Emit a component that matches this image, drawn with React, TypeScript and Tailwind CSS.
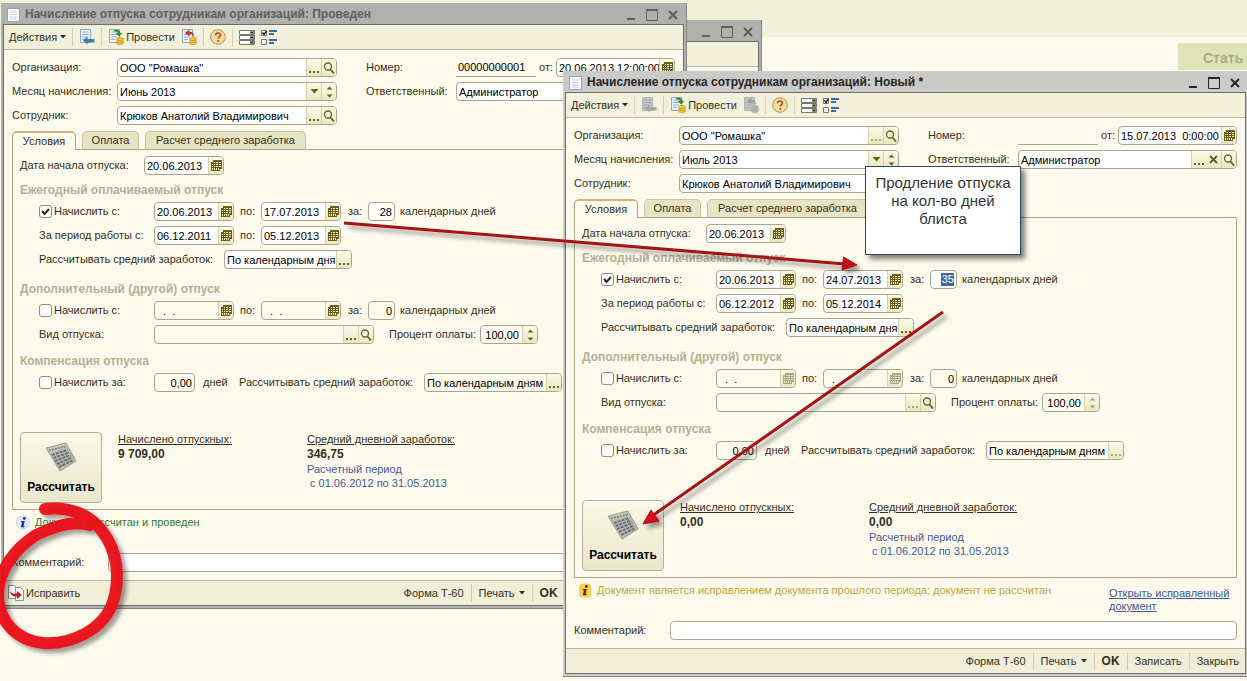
import type { ReactNode } from 'react'
import clsx from 'clsx'

type Action = 'dots' | 'search' | 'calendar' | 'down' | 'spin' | 'clear'

const actionNames: Record<Action, string> = {
  dots: 'Выбрать',
  search: 'Открыть',
  calendar: 'Календарь',
  down: 'Список',
  spin: 'Изменить',
  clear: 'Очистить'
}

function ActionIcon({ action }: { action: Action }) {
  switch (action) {
    case 'dots':
      return (
        <svg width="12" height="12" viewBox="0 0 12 12" fill="currentColor">
          <path d="M1 9h2v2H1zM5 9h2v2H5zM9 9h2v2H9z" />
        </svg>
      )
    case 'search':
      return (
        <svg width="12" height="12" viewBox="0 0 12 12" fill="none" stroke="currentColor">
          <circle cx="5" cy="4.5" r="3.5" strokeWidth="1.3" />
          <path d="M7.5 7.5l3.5 4" strokeWidth="1.8" />
        </svg>
      )
    case 'calendar':
      return (
        <svg width="11" height="12" viewBox="0 0 11 12">
          <path d="M2 0h9v9H9v2H0V2h2z" fill="currentColor" />
          <path
            d="M3 2h1v1H3zM5 2h2v1H5zM8 2h2v1H8zM1 4h1v1H1zM3 4h1v1H3zM5 4h2v1H5zM8 4h2v1H8zM1 6h1v1H1zM3 6h1v1H3zM5 6h2v1H5zM8 6h2v1H8zM1 8h1v2H1zM3 8h1v2H3zM5 8h1v2H5zM7 8h1v2H7z"
            fill="#f3eec0"
          />
        </svg>
      )
    case 'down':
      return (
        <svg width="9" height="5" viewBox="0 0 9 5" fill="currentColor">
          <path d="M0.5 0h8l-4 4.5z" />
        </svg>
      )
    case 'spin':
      return (
        <svg width="7" height="12" viewBox="0 0 7 12" fill="currentColor">
          <path d="M0.5 3.5h6l-3-3zM0.5 8.5h6l-3 3z" />
        </svg>
      )
    case 'clear':
      return (
        <svg width="9" height="9" viewBox="0 0 9 9" stroke="currentColor" strokeWidth="2">
          <path d="M1 1l7 7M8 1l-7 7" />
        </svg>
      )
  }
}

interface FieldProps {
  id: string
  name?: string
  value?: string
  actions?: Action[]
  dimmed?: Action[]
  className?: string
  muted?: boolean
  right?: boolean
  selected?: boolean
}

function Field({ id, name, value = '', actions = [], dimmed = [], className, muted, right, selected }: FieldProps) {
  return (
    <span
      className={clsx(
        'flex h-[19px] shrink-0 overflow-hidden rounded-[4px] border border-[#a8a78d]',
        muted ? 'bg-[#fdfbee]' : 'bg-white',
        right && !actions.length && 'justify-end pr-[2px]',
        className
      )}
    >
      <input
        id={id}
        aria-label={name}
        defaultValue={value}
        className={clsx(
          'min-w-0 outline-none',
          right && 'text-right',
          right && actions.length > 0 && 'pr-[3px]',
          selected
            ? 'my-[2px] h-[13px] w-[13px] bg-[#4666a0] text-white'
            : 'h-[17px] w-full flex-1 bg-transparent pl-[2px] text-black'
        )}
      />
      {actions.map((action) => (
        <button
          key={action}
          aria-label={actionNames[action]}
          className={clsx(
            'flex w-[15px] shrink-0 items-center justify-center bg-gradient-to-b from-[#fbfae8] to-[#eae8c0]',
            (action === actions[0] || action === 'search' || action === 'spin') && 'border-l border-[#d3d1ae]',
            dimmed.includes(action) ? 'text-[#aaa88a]' : 'text-[#6b5e1c]'
          )}
        >
          <ActionIcon action={action} />
        </button>
      ))}
    </span>
  )
}

function Label({ htmlFor, className, children }: { htmlFor: string; className?: string; children: ReactNode }) {
  return (
    <label htmlFor={htmlFor} className={clsx('shrink-0 whitespace-nowrap', className)}>
      {children}
    </label>
  )
}

function Tick({ id, checked, children }: { id: string; checked?: boolean; children: ReactNode }) {
  return (
    <span className="flex w-[115px] shrink-0 items-center gap-[2px]">
      <span className="relative flex size-[13px]">
        <input
          id={id}
          type="checkbox"
          defaultChecked={checked}
          className="peer size-[13px] appearance-none rounded-[3px] border border-[#8f8e78] bg-white"
        />
        <svg
          viewBox="0 0 13 13"
          className="pointer-events-none absolute inset-0 hidden peer-checked:block"
          fill="none"
          stroke="#2b2a20"
          strokeWidth="2"
        >
          <path d="M3 6l2.5 3L10 4" />
        </svg>
      </span>
      <Label htmlFor={id}>{children}</Label>
    </span>
  )
}

function Row({ indent, children }: { indent?: boolean; children: ReactNode }) {
  return <div className={clsx('flex h-[19px] items-center', indent && 'pl-[19px]')}>{children}</div>
}

function Heading({ className, children }: { className?: string; children: ReactNode }) {
  return (
    <h2 className={clsx('flex items-end pb-1 text-[12px] leading-4 font-bold text-[#b3b093]', className)}>
      {children}
    </h2>
  )
}

function PageIcon() {
  return (
    <svg width="13" height="14" viewBox="0 0 13 14" className="shrink-0">
      <path d="M0.5 0.5h12v13h-12z" fill="#f8fbff" stroke="#8fa5c0" />
      <path d="M3 4h7M3 6.500h7M3 9h7M3 11h7" stroke="#c3d0e0" />
    </svg>
  )
}

function SheetIcon({ off, kind }: { off?: boolean; kind: 'save' | 'post' | 'unpost' }) {
  return (
    <svg width="16" height="16" viewBox="0 0 16 16">
      <path d="M1.500 0.500h10v13h-10z" fill={off ? '#c3c5c8' : '#eef5fb'} stroke={off ? '#b1b3b6' : '#8fa9c2'} />
      <path d="M3 3h7M3 5.500h7M3 8h6M3 10.500h4" stroke={off ? '#a9abae' : '#8fb0cc'} />
      {kind === 'save' && (
        <path d="M4 11.500l4.500-4v2.500h7v3.500h-7v2z" fill={off ? '#a3a5a9' : '#3b7cb0'} />
      )}
      {kind === 'post' && (
        <path d="M6 1c4-1 6.500 .5 6.500 3h2l-3.500 3.500L7.500 4H10C10 3 9 2.500 6 2.500z" fill="#3d8a3a" />
      )}
      {kind === 'unpost' && (
        <path d="M12.500 8c1-4-1-5.500-4-5V0.500L4 4l4.500 3.500V5c2-.3 3 .5 4 3z" fill={off ? '#9fa1a5' : '#b93a2a'} />
      )}
      {kind !== 'save' && (
        <g fill={off ? '#b3b4b4' : '#f0c637'} stroke={off ? '#a3a4a4' : '#b98f1c'} strokeWidth="0.600">
          <ellipse cx="12" cy="14" rx="3.500" ry="1.600" />
          <ellipse cx="12" cy="12" rx="3.500" ry="1.600" />
          <ellipse cx="12" cy="10" rx="3.500" ry="1.600" />
        </g>
      )}
    </svg>
  )
}

function HelpIcon() {
  return (
    <svg width="16" height="16" viewBox="0 0 16 16">
      <circle cx="8" cy="8" r="7.300" fill="#fbdca0" stroke="#c08a52" />
      <path d="M5.500 6.300c0-3 5-3 5-.2 0 1.700-2.300 1.700-2.300 3.500" fill="none" stroke="#9a4f1e" strokeWidth="1.500" />
      <path d="M7.300 11h1.700v1.700H7.300z" fill="#9a4f1e" />
    </svg>
  )
}

function ListIcon() {
  return (
    <svg width="16" height="15" viewBox="0 0 16 15">
      {[0, 5, 10].map((y) => (
        <g key={y}>
          <path d={`M0.500 ${y + 0.5}h15v4h-15z`} fill="#fff" stroke="#77776e" />
          <path d={`M11 ${y + 1}h4v3h-4z`} fill="#8b8b82" />
          <path d={`M12 ${y + 2}h2v1h-2z`} fill="#22221e" />
        </g>
      ))}
    </svg>
  )
}

function SettingsIcon() {
  return (
    <svg width="17" height="15" viewBox="0 0 17 15">
      <path d="M0.500 0.500h5v5h-5zM0.500 9.500h5v5h-5z" fill="#fff" stroke="#77776e" />
      <path d="M1.500 2.500l1.500 2 2.500-3.500" fill="none" stroke="#111" strokeWidth="1.300" />
      <path d="M8 1h8M8 4h5M8 10h8M8 13h5" stroke="#3b68ae" strokeWidth="2" />
    </svg>
  )
}

function FixIcon() {
  return (
    <svg width="16" height="16" viewBox="0 0 16 16">
      <path d="M0.500 0.500h6l2 2v11h-8z" fill="#fff" stroke="#9a8c8c" />
      <path d="M7.500 2.500h5l3 3v10h-8z" fill="#fff" stroke="#9a8c8c" />
      <path d="M2 6c2 3 4 3 7 2.500V6l5 4-5 4v-2.500C5 12 2.500 10 2 6z" fill="#c11b2c" />
    </svg>
  )
}

function CalculatorIcon() {
  return (
    <svg width="32" height="30" viewBox="0 0 32 30">
      <path d="M1 6L21 1l10 18-16 10z" fill="#b9bbb1" stroke="#9b9d94" />
      <path d="M2.500 6.500L20.500 2l2 3.500-18 5z" fill="#c9ccb8" />
      <path d="M4 8.500l16.500-4" stroke="#84866f" strokeWidth="2" strokeDasharray="2 1" />
      <g stroke="#6a6e76" strokeWidth="2" strokeDasharray="3 1">
        <path d="M7 13l15.500-5" />
        <path d="M8.500 16L24 10.500" />
        <path d="M10 19l15.500-6" />
        <path d="M12 22l15-6.500" />
        <path d="M14 25l14.500-7" />
      </g>
    </svg>
  )
}

function InfoIcon({ warning }: { warning?: boolean }) {
  return (
    <svg width="14" height="15" viewBox="0 0 14 15" className="shrink-0">
      {warning ? (
        <rect x="1" y="0.500" width="12" height="14" rx="4" fill="#f8cf4c" />
      ) : (
        <circle cx="7" cy="7.500" r="6.500" fill="#e6ebfa" stroke="#bfcbe8" />
      )}
      <g fill={warning ? '#4a2c10' : '#1b2c9c'}>
        <circle cx="8.300" cy="3.400" r="1.400" />
        <path d="M5 6h3.800l-1.300 5h1.300l-.5 1.200H4.800l1.300-5H4.700z" />
      </g>
    </svg>
  )
}

function WindowButtons() {
  return (
    <div className="ml-auto flex items-center gap-[9px]">
      <button aria-label="Свернуть">
        <svg width="11" height="12" viewBox="0 0 11 12" fill="currentColor">
          <path d="M1 9h8v2H1z" />
        </svg>
      </button>
      <button aria-label="Развернуть">
        <svg width="12" height="12" viewBox="0 0 12 12" fill="none" stroke="currentColor">
          <path d="M0.500 1h11v10.500h-11z" />
          <path d="M0 1h12" strokeWidth="2" />
        </svg>
      </button>
      <button aria-label="Закрыть окно">
        <svg width="12" height="12" viewBox="0 0 12 12" stroke="currentColor" strokeWidth="2">
          <path d="M2 2l8 8M10 2l-8 8" />
        </svg>
      </button>
    </div>
  )
}

function Separator() {
  return <span className="h-[18px] w-px bg-[#cfcdb4]" />
}

function Caret() {
  return (
    <svg width="6" height="4" viewBox="0 0 6 4" fill="currentColor">
      <path d="M0 0h6L3 3.500z" />
    </svg>
  )
}

interface LeaveDoc {
  key: string
  state: string
  number: string
  date: string
  month: string
  to: string
  periodFrom: string
  periodTo: string
  days: string
  accrued: string
  average: string
  posted: boolean
}

const postedDoc: LeaveDoc = {
  key: 'posted',
  state: 'Проведен',
  number: '00000000001',
  date: '20.06.2013 12:00:00',
  month: 'Июнь 2013',
  to: '17.07.2013',
  periodFrom: '06.12.2011',
  periodTo: '05.12.2013',
  days: '28',
  accrued: '9 709,00',
  average: '346,75',
  posted: true
}

const newDoc: LeaveDoc = {
  key: 'new',
  state: 'Новый *',
  number: '',
  date: '15.07.2013  0:00:00',
  month: 'Июль 2013',
  to: '24.07.2013',
  periodFrom: '06.12.2012',
  periodTo: '05.12.2014',
  days: '35',
  accrued: '0,00',
  average: '0,00',
  posted: false
}

function Toolbar({ posted }: { posted: boolean }) {
  return (
    <div className="flex h-[25px] items-center gap-[6px] border-b border-[#b9b79c] bg-[#f3f1dc] pl-[5px]">
      <button className="flex items-center gap-[3px]">
        Действия <Caret />
      </button>
      <Separator />
      <button aria-label="Записать документ">
        <SheetIcon kind="save" off={!posted} />
      </button>
      <Separator />
      <button className="flex items-center gap-[2px]">
        <SheetIcon kind="post" /> Провести
      </button>
      <button aria-label="Отмена проведения">
        <SheetIcon kind="unpost" off={!posted} />
      </button>
      <Separator />
      <button aria-label="Справка">
        <HelpIcon />
      </button>
      <Separator />
      <button aria-label="Список">
        <ListIcon />
      </button>
      <button aria-label="Настройка">
        <SettingsIcon />
      </button>
    </div>
  )
}

function Tabs() {
  return (
    <div role="tablist" className="relative -mb-px flex h-[19px] items-stretch gap-[6px]">
      <button
        role="tab"
        aria-selected="true"
        className="w-[64px] rounded-t-[5px] border border-t-2 border-b-0 border-[#a8a78d] border-t-[#d8b27c] bg-[#fefbee]"
      >
        Условия
      </button>
      <button
        role="tab"
        aria-selected="false"
        className="w-[57px] rounded-t-[5px] border border-[#c6c4a2] border-b-[#a8a78d] bg-[#e6e4c3]"
      >
        Оплата
      </button>
      <button
        role="tab"
        aria-selected="false"
        className="w-[161px] rounded-t-[5px] border border-[#c6c4a2] border-b-[#a8a78d] bg-[#e6e4c3]"
      >
        Расчет среднего заработка
      </button>
    </div>
  )
}

function Conditions({ doc }: { doc: LeaveDoc }) {
  const id = (name: string) => `${doc.key}-${name}`
  const off: Action[] = doc.posted ? [] : ['calendar', 'dots', 'spin']

  return (
    <section className="border border-[#a8a78d] pt-[6px] pb-[6px] pl-[7px]">
      <Row>
        <Label htmlFor={id('start')} className="w-[124px]">
          Дата начала отпуска:
        </Label>
        <Field id={id('start')} value="20.06.2013" actions={['calendar']} className="w-[80px]" />
      </Row>

      <Heading className="h-[27px]">Ежегодный оплачиваемый отпуск</Heading>
      <div className="flex flex-col gap-[5px]">
        <Row indent>
          <Tick id={id('main')} checked>
            Начислить с:
          </Tick>
          <Field id={id('from')} name="Начислить с" value="20.06.2013" actions={['calendar']} className="w-[80px]" />
          <Label htmlFor={id('to')} className="w-[27px] pl-[6px]">
            по:
          </Label>
          <Field id={id('to')} value={doc.to} actions={['calendar']} className="w-[80px]" />
          <Label htmlFor={id('days')} className="w-[27px] pl-[7px]">
            за:
          </Label>
          <Field id={id('days')} value={doc.days} right selected={!doc.posted} className="w-[27px]" />
          <span className="pl-[5px]">календарных дней</span>
        </Row>
        <Row indent>
          <Label htmlFor={id('pfrom')} className="w-[115px]">
            За период работы с:
          </Label>
          <Field id={id('pfrom')} value={doc.periodFrom} actions={['calendar']} className="w-[80px]" />
          <Label htmlFor={id('pto')} className="w-[27px] pl-[6px]">
            по:
          </Label>
          <Field id={id('pto')} value={doc.periodTo} actions={['calendar']} className="w-[80px]" />
        </Row>
        <Row indent>
          <Label htmlFor={id('avg')} className="w-[185px]">
            Рассчитывать средний заработок:
          </Label>
          <Field id={id('avg')} value="По календарным дням" actions={['dots']} className="w-[128px]" />
        </Row>
      </div>

      <Heading className="h-[32px]">Дополнительный (другой) отпуск</Heading>
      <div className="flex flex-col gap-[5px]">
        <Row indent>
          <Tick id={id('extra')}>Начислить с:</Tick>
          <Field
            id={id('efrom')}
            name="Дополнительный с"
            value="  .  ."
            muted
            actions={['calendar']}
            dimmed={off}
            className="w-[80px]"
          />
          <Label htmlFor={id('eto')} className="w-[27px] pl-[6px]">
            по:
          </Label>
          <Field id={id('eto')} value="  .  ." muted actions={['calendar']} dimmed={off} className="w-[80px]" />
          <Label htmlFor={id('edays')} className="w-[27px] pl-[7px]">
            за:
          </Label>
          <Field id={id('edays')} value="0" muted right className="w-[27px]" />
          <span className="pl-[5px]">календарных дней</span>
        </Row>
        <Row indent>
          <Label htmlFor={id('kind')} className="w-[115px]">
            Вид отпуска:
          </Label>
          <Field id={id('kind')} muted actions={['dots', 'search']} dimmed={off} className="w-[220px]" />
          <Label htmlFor={id('percent')} className="w-[106px] pl-[15px]">
            Процент оплаты:
          </Label>
          <Field id={id('percent')} value="100,00" muted right actions={['spin']} dimmed={off} className="w-[58px]" />
        </Row>
      </div>

      <Heading className="h-[29px]">Компенсация отпуска</Heading>
      <Row indent>
        <Tick id={id('comp')}>Начислить за:</Tick>
        <Field id={id('cdays')} name="Начислить за, дней" value="0,00" muted right className="w-[41px]" />
        <span className="w-[44px] pl-2">дней</span>
        <Label htmlFor={id('cavg')} className="w-[185px]">
          Рассчитывать средний заработок:
        </Label>
        <Field
          id={id('cavg')}
          value="По календарным дням"
          muted
          actions={['dots']}
          dimmed={off}
          className="w-[138px]"
        />
      </Row>

      <div className="mt-10 flex">
        <button className="flex h-[71px] w-[82px] flex-col items-center justify-between rounded-[4px] border border-[#b3b195] bg-gradient-to-b from-[#fbf9e8] to-[#e9e7cb] pt-[9px] pb-[7px] text-[12px] font-bold text-black">
          <CalculatorIcon />
          Рассчитать
        </button>
        <div className="w-[205px] pl-4">
          <p className="underline">Начислено отпускных:</p>
          <p className="text-[12px] font-bold">{doc.accrued}</p>
        </div>
        <div>
          <p className="underline">Средний дневной заработок:</p>
          <p className="text-[12px] font-bold">{doc.average}</p>
          <p className="leading-[15px] text-[#3d5a92]">Расчетный период</p>
          <p className="pl-[3px] leading-[13px] text-[#3d5a92]">с 01.06.2012 по 31.05.2013</p>
        </div>
      </div>
    </section>
  )
}

function Footer({ posted }: { posted: boolean }) {
  return (
    <footer className="flex h-[25px] items-center gap-[7px] border-t border-[#b9b79c] bg-[#f1efd9] pr-[6px] pl-1">
      {posted && (
        <button className="flex items-center gap-[2px]">
          <FixIcon /> Исправить
        </button>
      )}
      <button className="ml-auto">Форма Т-60</button>
      <Separator />
      <button className="flex items-center gap-1">
        Печать <Caret />
      </button>
      <Separator />
      <button className="text-[12px] font-bold">OK</button>
      <Separator />
      <button className={clsx(posted && 'invisible')}>Записать</button>
      <Separator />
      <button className={clsx(posted && 'invisible')}>Закрыть</button>
    </footer>
  )
}

function LeaveWindow({ doc, className }: { doc: LeaveDoc; className: string }) {
  const id = (name: string) => `${doc.key}-${name}`
  const off: Action[] = doc.posted ? [] : ['dots']

  return (
    <article
      className={clsx(
        'absolute border-r border-b border-[#858583] px-[2px] pb-[2px]',
        doc.posted ? 'bg-[#b0b0ae]' : 'bg-[#cacac9]',
        className
      )}
    >
      <header
        className={clsx(
          'flex h-[21px] items-center gap-[5px] pt-[2px] pr-[5px] pl-1',
          doc.posted ? 'text-[#5f5f5e]' : 'text-[#262626]'
        )}
      >
        <PageIcon />
        <h1 className="text-[12px] font-bold whitespace-nowrap">
          Начисление отпуска сотрудникам организаций: {doc.state}
        </h1>
        <WindowButtons />
      </header>
      <div className="border border-[#6f6f6a] bg-[#fefbee]">
        <Toolbar posted={doc.posted} />
        <div className="p-2">
          <div className="flex flex-col gap-[5px]">
            <Row>
              <Label htmlFor={id('org')} className="w-[105px]">
                Организация:
              </Label>
              <Field
                id={id('org')}
                value={'ООО "Ромашка"'}
                actions={['dots', 'search']}
                dimmed={off}
                className="w-[220px]"
              />
              <Label htmlFor={id('num')} className="w-[119px] pl-[29px]">
                Номер:
              </Label>
              <input
                id={id('num')}
                defaultValue={doc.number}
                className="h-[19px] w-[80px] border-b border-[#a8a78d] bg-transparent pl-[2px] text-black outline-none"
              />
              <Label htmlFor={id('date')} className="w-[20px] pl-[3px]">
                от:
              </Label>
              <Field id={id('date')} value={doc.date} actions={['calendar']} className="flex-1" />
            </Row>
            <Row>
              <Label htmlFor={id('month')} className="w-[105px]">
                Месяц начисления:
              </Label>
              <Field id={id('month')} value={doc.month} actions={['down', 'spin']} className="w-[220px]" />
              <Label htmlFor={id('owner')} className="w-[119px] pl-[29px]">
                Ответственный:
              </Label>
              <Field
                id={id('owner')}
                value="Администратор"
                actions={['dots', 'clear', 'search']}
                className="flex-1"
              />
            </Row>
            <Row>
              <Label htmlFor={id('person')} className="w-[105px]">
                Сотрудник:
              </Label>
              <Field
                id={id('person')}
                value="Крюков Анатолий Владимирович"
                actions={['dots', 'search']}
                className="w-[220px]"
              />
            </Row>
          </div>
          <div className="mt-[6px]">
            <Tabs />
            <Conditions doc={doc} />
          </div>
          <div className="flex h-[43px] items-start justify-between pl-1">
            <p className={clsx('flex items-center gap-[5px] pt-[5px]', doc.posted ? 'text-[#2f7a2c]' : 'text-[#bda53a]')}>
              <InfoIcon warning={!doc.posted} />
              {doc.posted
                ? 'Документ рассчитан и проведен'
                : 'Документ является исправлением документа прошлого периода; документ не рассчитан'}
            </p>
            {!doc.posted && (
              <a href="#original" className="w-[128px] pt-[9px] leading-[13px] text-[#3d5a92] underline">
                Открыть исправленный документ
              </a>
            )}
          </div>
          <Row>
            <Label htmlFor={id('comment')} className="w-[96px]">
              Комментарий:
            </Label>
            <Field id={id('comment')} className="flex-1" />
          </Row>
        </div>
        <Footer posted={doc.posted} />
      </div>
    </article>
  )
}

function Annotations() {
  return (
    <svg width="1247" height="681" viewBox="0 0 1247 681" className="pointer-events-none absolute top-0 left-0">
      <defs>
        <filter id="shade" x="-20%" y="-50%" width="140%" height="200%">
          <feDropShadow dx="4" dy="4" stdDeviation="2" floodColor="#000" floodOpacity="0.4" />
        </filter>
      </defs>
      <g filter="url(#shade)">
        <path d="M344 223L845 264" stroke="#a31217" strokeWidth="3" />
        <path d="M857 265l-15 5 1.500-13z" fill="#c40d12" stroke="#a31217" />
      </g>
      <g filter="url(#shade)">
        <path d="M943 312L652 516" stroke="#a31217" strokeWidth="3" />
        <path d="M643 524l8-14 8 11z" fill="#d40d12" stroke="#a31217" />
      </g>
      <path
        d="M45 509C70 506 90 515 102 531C117 550 121 577 113 602C104 629 72 645 43 643C16 640 0 622 -2 598C-3 570 16 548 36 535C54 526 74 520 90 525"
        fill="none"
        stroke="#ea0f16"
        strokeOpacity="0.940"
        strokeWidth="12"
        strokeLinecap="round"
        strokeLinejoin="round"
        filter="url(#shade)"
      />
    </svg>
  )
}

export default function App() {
  return (
    <main className="relative h-screen overflow-hidden bg-[#fefbee] font-['Liberation_Sans',Arial,sans-serif] text-[11px] leading-[15px] text-[#33301a]">
      <div className="h-[37px] bg-[#f2f1dc]" />
      <div className="mt-[6px] ml-auto h-[27px] w-[69px] overflow-hidden bg-[#dfe4b6] pl-[25px] text-[14px] leading-[30px] font-bold whitespace-nowrap text-[#a8ab86]">
        Стать
      </div>

      <div className="absolute top-[20px] right-[485px] left-[120px] h-[300px] border-r border-[#858583] bg-[#b0b0ae] px-[2px]">
        <div className="flex h-[21px] items-center pt-[2px] pr-[5px] text-[#5f5f5e]">
          <WindowButtons />
        </div>
        <div className="h-[270px] border border-[#6f6f6a] bg-[#fefbee]">
          <div className="h-[25px] border-b border-[#b9b79c] bg-[#f3f1dc]" />
        </div>
      </div>

      <LeaveWindow doc={postedDoc} className="top-[3px] right-[560px] left-px" />
      <LeaveWindow doc={newDoc} className="top-[71px] -right-[2px] left-[563px]" />

      <Annotations />
      <aside className="absolute top-[166px] left-[865px] h-[89px] w-[156px] border border-[#2f4a5a] bg-white px-1 pt-[7px] text-center text-[15px] leading-[18px] text-[#333] shadow-[4px_4px_5px_rgba(0,0,0,0.5)]">
        Продление отпуска на кол-во дней блиста
      </aside>
    </main>
  )
}
